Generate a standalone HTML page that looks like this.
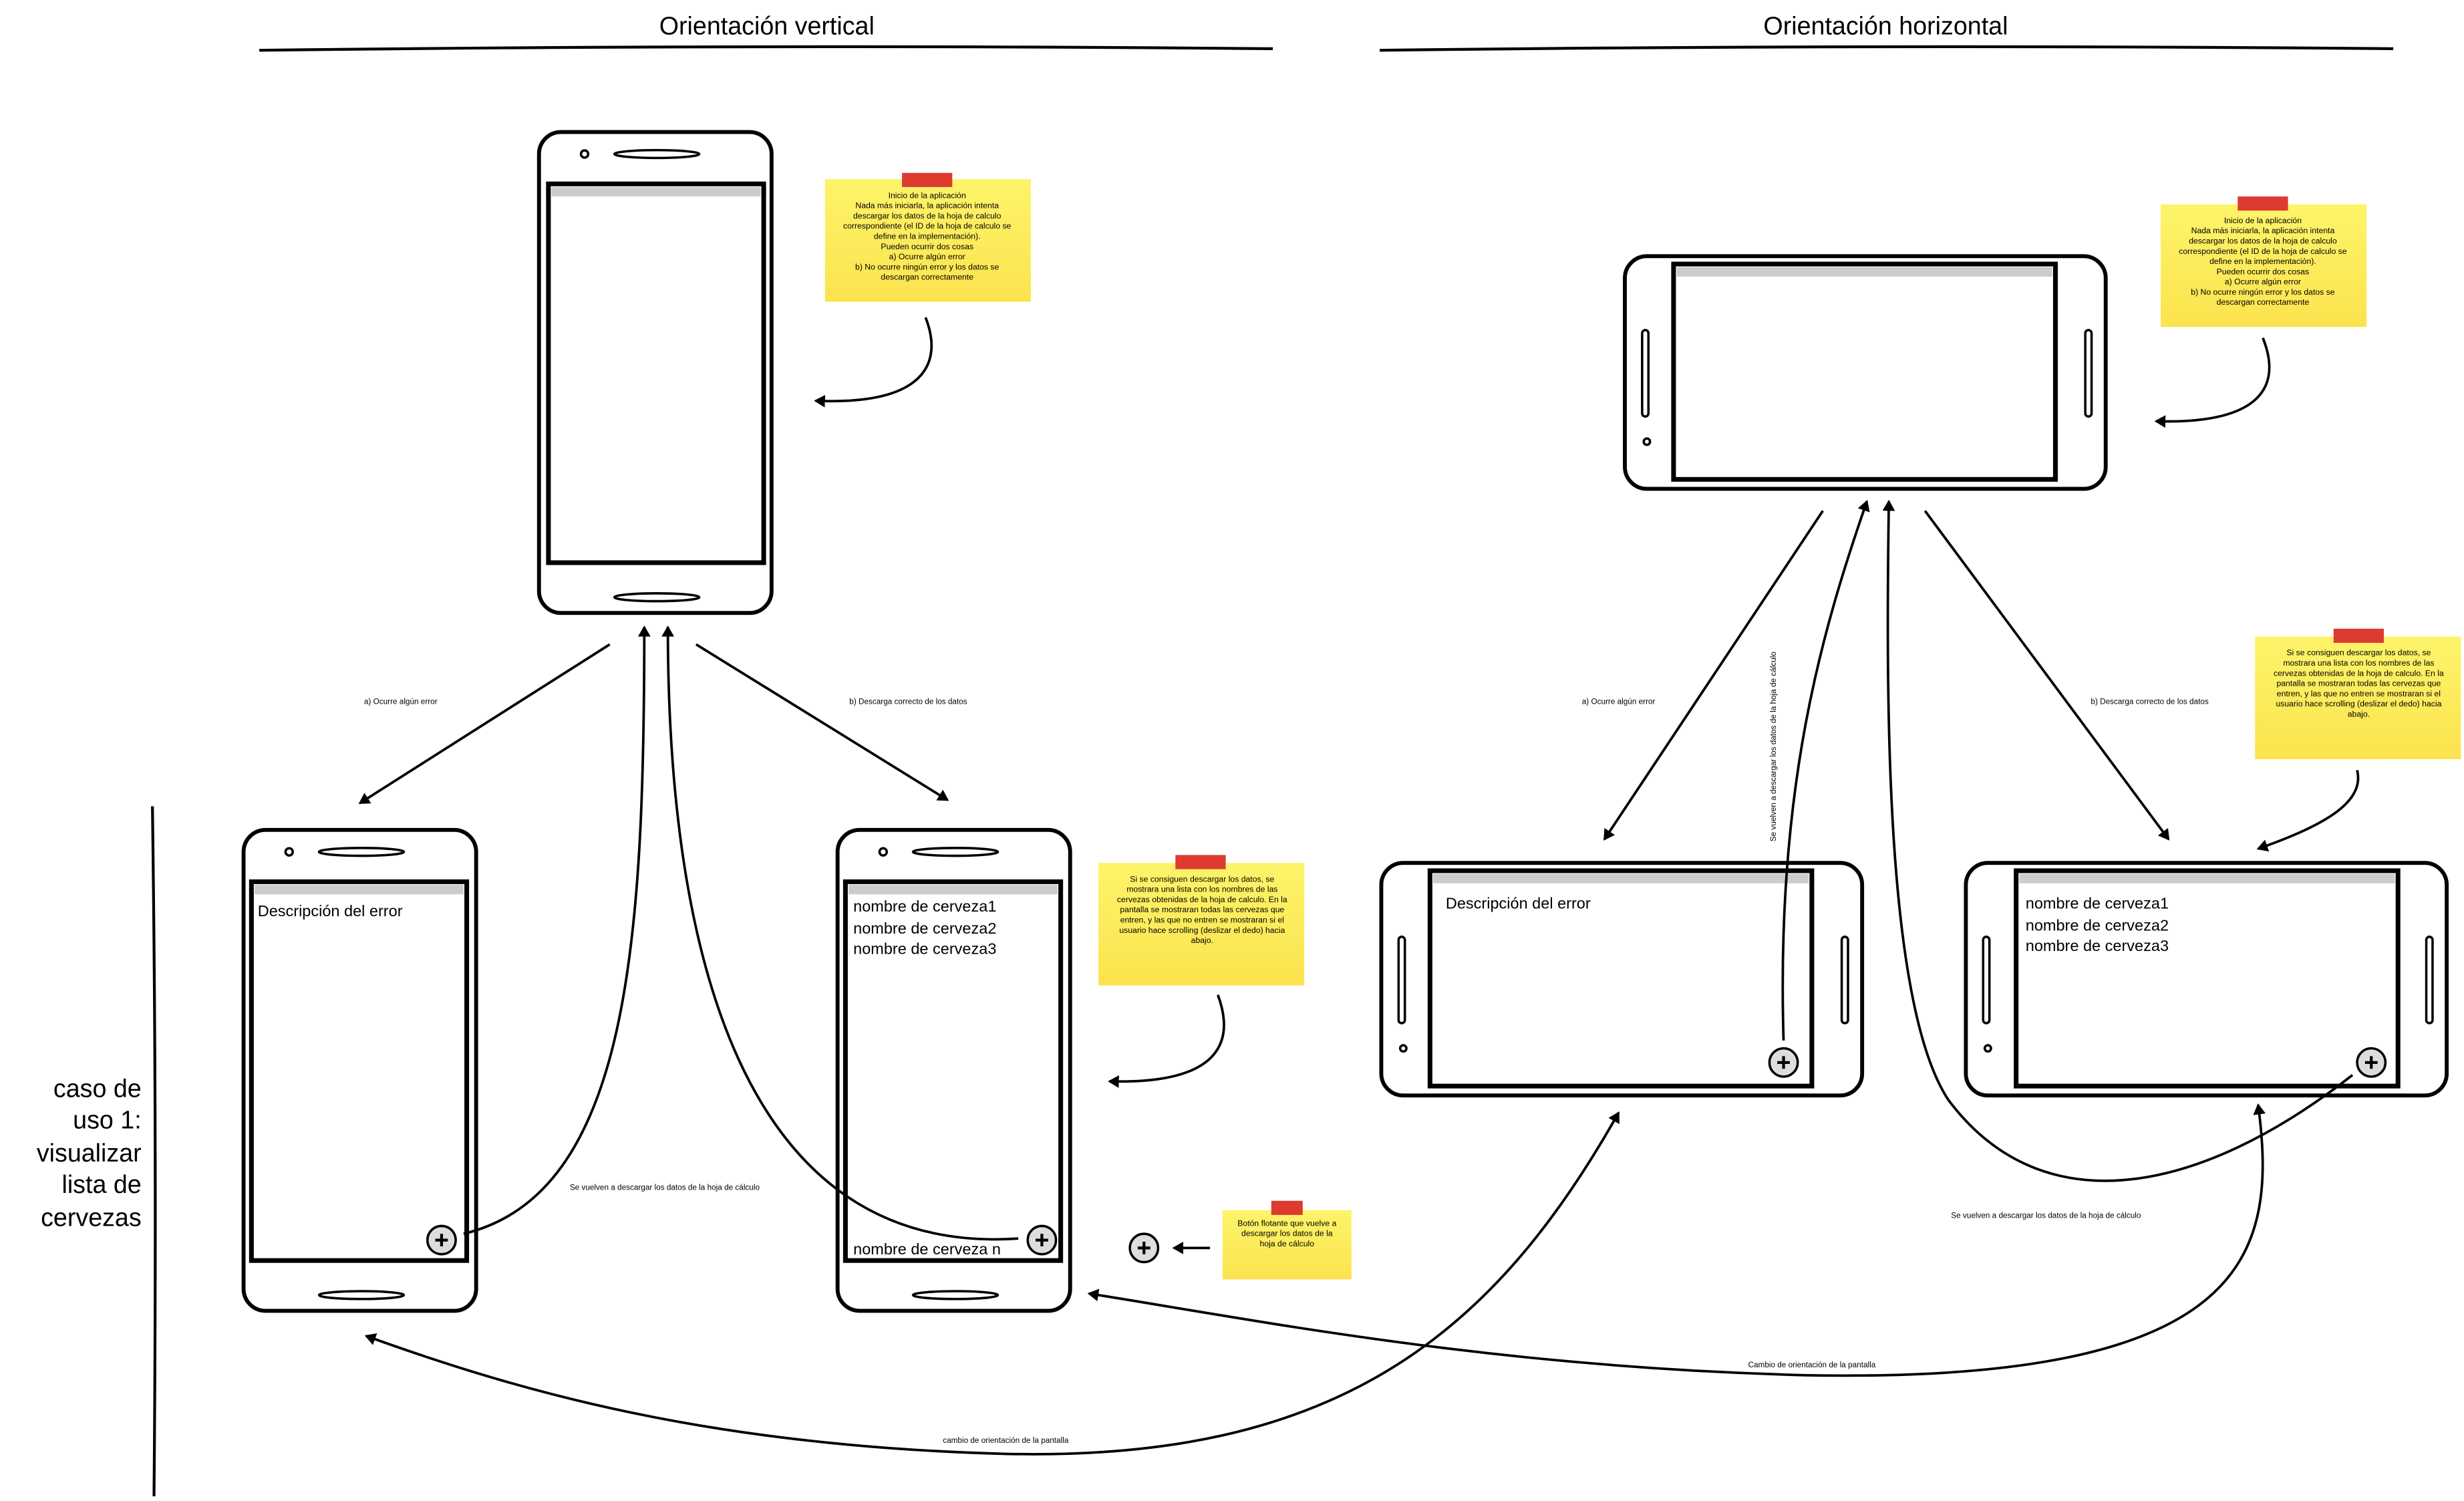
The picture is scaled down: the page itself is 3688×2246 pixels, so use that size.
<!DOCTYPE html>
<html><head><meta charset="utf-8"><style>
html,body{margin:0;padding:0;background:#fff;}
svg{display:block;}
text{font-family:"Liberation Sans",sans-serif;fill:#000;}
.n{font-size:5.2px;text-anchor:middle;}
.s{font-size:5px;text-anchor:middle;}
</style></head><body>
<svg width="3688" height="2246" viewBox="0 0 1568 955" preserveAspectRatio="none" xmlns="http://www.w3.org/2000/svg">
<defs>
<marker id="a" markerWidth="8" markerHeight="8" refX="6" refY="4" orient="auto" markerUnits="userSpaceOnUse"><path d="M0,0 L7,4 L0,8 Z" fill="#000"/></marker>
<marker id="b" markerWidth="8" markerHeight="8" refX="6" refY="4" orient="auto-start-reverse" markerUnits="userSpaceOnUse"><path d="M0,0 L7,4 L0,8 Z" fill="#000"/></marker>
<linearGradient id="y" x1="0" y1="0" x2="0" y2="1"><stop offset="0" stop-color="#fdf46a"/><stop offset="1" stop-color="#fce34e"/></linearGradient>
<g id="fab"><circle r="9" fill="#ddd" stroke="#000" stroke-width="1.5"/><path d="M-4,0H4M0,-4V4" stroke="#000" stroke-width="1.8"/></g>
</defs>

<text x="488" y="22" font-size="16" text-anchor="middle">Orientación vertical</text>
<text x="1200" y="22" font-size="16" text-anchor="middle">Orientación horizontal</text>
<path d="M165,32 Q480,28 810,31" stroke="#000" stroke-width="1.8" fill="none"/>
<path d="M878,32 Q1200,28 1523,31" stroke="#000" stroke-width="1.8" fill="none"/>
<path d="M97,513 Q100,730 98,952" stroke="#000" stroke-width="1.8" fill="none"/>
<g font-size="16" text-anchor="end"><text x="90" y="698">caso de</text><text x="90" y="718">uso 1:</text><text x="90" y="739">visualizar</text><text x="90" y="759">lista de</text><text x="90" y="780">cervezas</text></g>

<g fill="#fff" stroke="#000">
<rect x="343" y="84" width="148" height="306" rx="14" stroke-width="2.5"/>
<rect x="155" y="528" width="148" height="306" rx="14" stroke-width="2.5"/>
<rect x="533" y="528" width="148" height="306" rx="14" stroke-width="2.5"/>
<rect x="349" y="117" width="137" height="241" stroke-width="3"/>
<rect x="160" y="561" width="137" height="241" stroke-width="3"/>
<rect x="538" y="561" width="137" height="241" stroke-width="3"/>
<circle cx="372" cy="98" r="2.3" stroke-width="1.5"/><circle cx="184" cy="542" r="2.3" stroke-width="1.5"/><circle cx="562" cy="542" r="2.3" stroke-width="1.5"/>
<ellipse cx="418" cy="98" rx="27" ry="2.5" stroke-width="1.5"/><ellipse cx="418" cy="380" rx="27" ry="2.5" stroke-width="1.5"/>
<ellipse cx="230" cy="542" rx="27" ry="2.5" stroke-width="1.5"/><ellipse cx="230" cy="824" rx="27" ry="2.5" stroke-width="1.5"/>
<ellipse cx="608" cy="542" rx="27" ry="2.5" stroke-width="1.5"/><ellipse cx="608" cy="824" rx="27" ry="2.5" stroke-width="1.5"/>
</g>
<g fill="#ccc"><rect x="351" y="119" width="133" height="6"/><rect x="162" y="563" width="133" height="6"/><rect x="540" y="563" width="133" height="6"/></g>

<g fill="#fff" stroke="#000">
<rect x="1034" y="163" width="306" height="148" rx="14" stroke-width="2.5"/>
<rect x="879" y="549" width="306" height="148" rx="14" stroke-width="2.5"/>
<rect x="1251" y="549" width="306" height="148" rx="14" stroke-width="2.5"/>
<rect x="1065" y="168" width="243" height="137" stroke-width="3"/>
<rect x="910" y="554" width="243" height="137" stroke-width="3"/>
<rect x="1283" y="554" width="243" height="137" stroke-width="3"/>
<rect x="1045" y="210" width="4" height="55" rx="2" stroke-width="1.5"/><rect x="1327" y="210" width="4" height="55" rx="2" stroke-width="1.5"/>
<rect x="890" y="596" width="4" height="55" rx="2" stroke-width="1.5"/><rect x="1172" y="596" width="4" height="55" rx="2" stroke-width="1.5"/>
<rect x="1262" y="596" width="4" height="55" rx="2" stroke-width="1.5"/><rect x="1544" y="596" width="4" height="55" rx="2" stroke-width="1.5"/>
<circle cx="1048" cy="281" r="2" stroke-width="1.5"/><circle cx="893" cy="667" r="2" stroke-width="1.5"/><circle cx="1265" cy="667" r="2" stroke-width="1.5"/>
</g>
<g fill="#ccc"><rect x="1067" y="170" width="239" height="6"/><rect x="912" y="556" width="239" height="6"/><rect x="1285" y="556" width="239" height="6"/></g>

<g font-size="10">
<text x="164" y="583">Descripción del error</text>
<text x="543" y="580">nombre de cerveza1</text><text x="543" y="594">nombre de cerveza2</text><text x="543" y="607">nombre de cerveza3</text>
<text x="543" y="798">nombre de cerveza n</text>
<text x="920" y="578">Descripción del error</text>
<text x="1289" y="578">nombre de cerveza1</text><text x="1289" y="592">nombre de cerveza2</text><text x="1289" y="605">nombre de cerveza3</text>
</g>
<use href="#fab" x="281" y="789"/><use href="#fab" x="663" y="789"/><use href="#fab" x="728" y="794"/>
<use href="#fab" x="1135" y="676"/><use href="#fab" x="1509" y="676"/>

<rect x="525" y="114" width="131" height="78" fill="url(#y)"/><rect x="574" y="110" width="32" height="9" fill="#dd3b30"/>
<text class="n"><tspan x="590" y="126">Inicio de la aplicación</tspan><tspan x="590" y="132.5">Nada más iniciarla, la aplicación intenta</tspan><tspan x="590" y="139">descargar los datos de la hoja de calculo</tspan><tspan x="590" y="145.5">correspondiente (el ID de la hoja de calculo se</tspan><tspan x="590" y="152">define en la implementación).</tspan><tspan x="590" y="158.5">Pueden ocurrir dos cosas</tspan><tspan x="590" y="165">a) Ocurre algún error</tspan><tspan x="590" y="171.5">b) No ocurre ningún error y los datos se</tspan><tspan x="590" y="178">descargan correctamente</tspan></text>

<rect x="1375" y="130" width="131" height="78" fill="url(#y)"/><rect x="1424" y="125" width="32" height="9" fill="#dd3b30"/>
<text class="n"><tspan x="1440" y="142">Inicio de la aplicación</tspan><tspan x="1440" y="148.5">Nada más iniciarla, la aplicación intenta</tspan><tspan x="1440" y="155">descargar los datos de la hoja de calculo</tspan><tspan x="1440" y="161.5">correspondiente (el ID de la hoja de calculo se</tspan><tspan x="1440" y="168">define en la implementación).</tspan><tspan x="1440" y="174.5">Pueden ocurrir dos cosas</tspan><tspan x="1440" y="181">a) Ocurre algún error</tspan><tspan x="1440" y="187.5">b) No ocurre ningún error y los datos se</tspan><tspan x="1440" y="194">descargan correctamente</tspan></text>

<rect x="699" y="549" width="131" height="78" fill="url(#y)"/><rect x="748" y="544" width="32" height="9" fill="#dd3b30"/>
<text class="n"><tspan x="765" y="561">Si se consiguen descargar los datos, se</tspan><tspan x="765" y="567.5">mostrara una lista con los nombres de las</tspan><tspan x="765" y="574">cervezas obtenidas de la hoja de calculo. En la</tspan><tspan x="765" y="580.5">pantalla se mostraran todas las cervezas que</tspan><tspan x="765" y="587">entren, y las que no entren se mostraran si el</tspan><tspan x="765" y="593.5">usuario hace scrolling (deslizar el dedo) hacia</tspan><tspan x="765" y="600">abajo.</tspan></text>

<rect x="1435" y="405" width="131" height="78" fill="url(#y)"/><rect x="1485" y="400" width="32" height="9" fill="#dd3b30"/>
<text class="n"><tspan x="1501" y="417">Si se consiguen descargar los datos, se</tspan><tspan x="1501" y="423.5">mostrara una lista con los nombres de las</tspan><tspan x="1501" y="430">cervezas obtenidas de la hoja de calculo. En la</tspan><tspan x="1501" y="436.5">pantalla se mostraran todas las cervezas que</tspan><tspan x="1501" y="443">entren, y las que no entren se mostraran si el</tspan><tspan x="1501" y="449.5">usuario hace scrolling (deslizar el dedo) hacia</tspan><tspan x="1501" y="456">abajo.</tspan></text>

<rect x="778" y="770" width="82" height="44" fill="url(#y)"/><rect x="809" y="764" width="20" height="9" fill="#dd3b30"/>
<text class="n"><tspan x="819" y="780">Botón flotante que vuelve a</tspan><tspan x="819" y="786.5">descargar los datos de la</tspan><tspan x="819" y="793">hoja de cálculo</tspan></text>

<g stroke="#000" stroke-width="1.6" fill="none" marker-end="url(#a)">
<path d="M589,202 C600,230 590,258 519,255"/>
<path d="M1440,215 C1452,245 1440,270 1372,268"/>
<path d="M775,633 C785,660 780,690 706,688"/>
<path d="M1500,490 C1505,510 1480,525 1437,540"/>
<path d="M770,794 L747,794"/>
<path d="M388,410 L229,511"/>
<path d="M443,410 L603,509"/>
<path d="M295,785 C400,760 410,600 410,399"/>
<path d="M648,788 C470,800 425,600 425,399"/>
<path d="M1160,325 L1021,534"/>
<path d="M1225,325 L1380,534"/>
<path d="M1135,662 C1130,500 1160,400 1188,319"/>
<path d="M1497,684 C1400,760 1300,780 1240,700 C1200,640 1200,450 1202,319"/>
<path marker-start="url(#b)" d="M1030,708 C950,850 850,930 640,925 C450,920 330,885 233,850"/>
<path marker-start="url(#b)" d="M1437,703 C1450,800 1430,880 1150,875 C950,870 800,840 693,823"/>
</g>

<text class="s" x="255" y="448">a) Ocurre algún error</text>
<text class="s" x="578" y="448">b) Descarga correcto de los datos</text>
<text class="s" x="1030" y="448">a) Ocurre algún error</text>
<text class="s" x="1368" y="448">b) Descarga correcto de los datos</text>
<text class="s" x="423" y="757">Se vuelven a descargar los datos de la hoja de cálculo</text>
<text class="s" x="1302" y="775">Se vuelven a descargar los datos de la hoja de cálculo</text>
<text class="s" transform="translate(1130,475) rotate(-90)">Se vuelven a descargar los datos de la hoja de cálculo</text>
<text class="s" x="640" y="918">cambio de orientación de la pantalla</text>
<text class="s" x="1153" y="870">Cambio de orientación de la pantalla</text>
</svg>
</body></html>
